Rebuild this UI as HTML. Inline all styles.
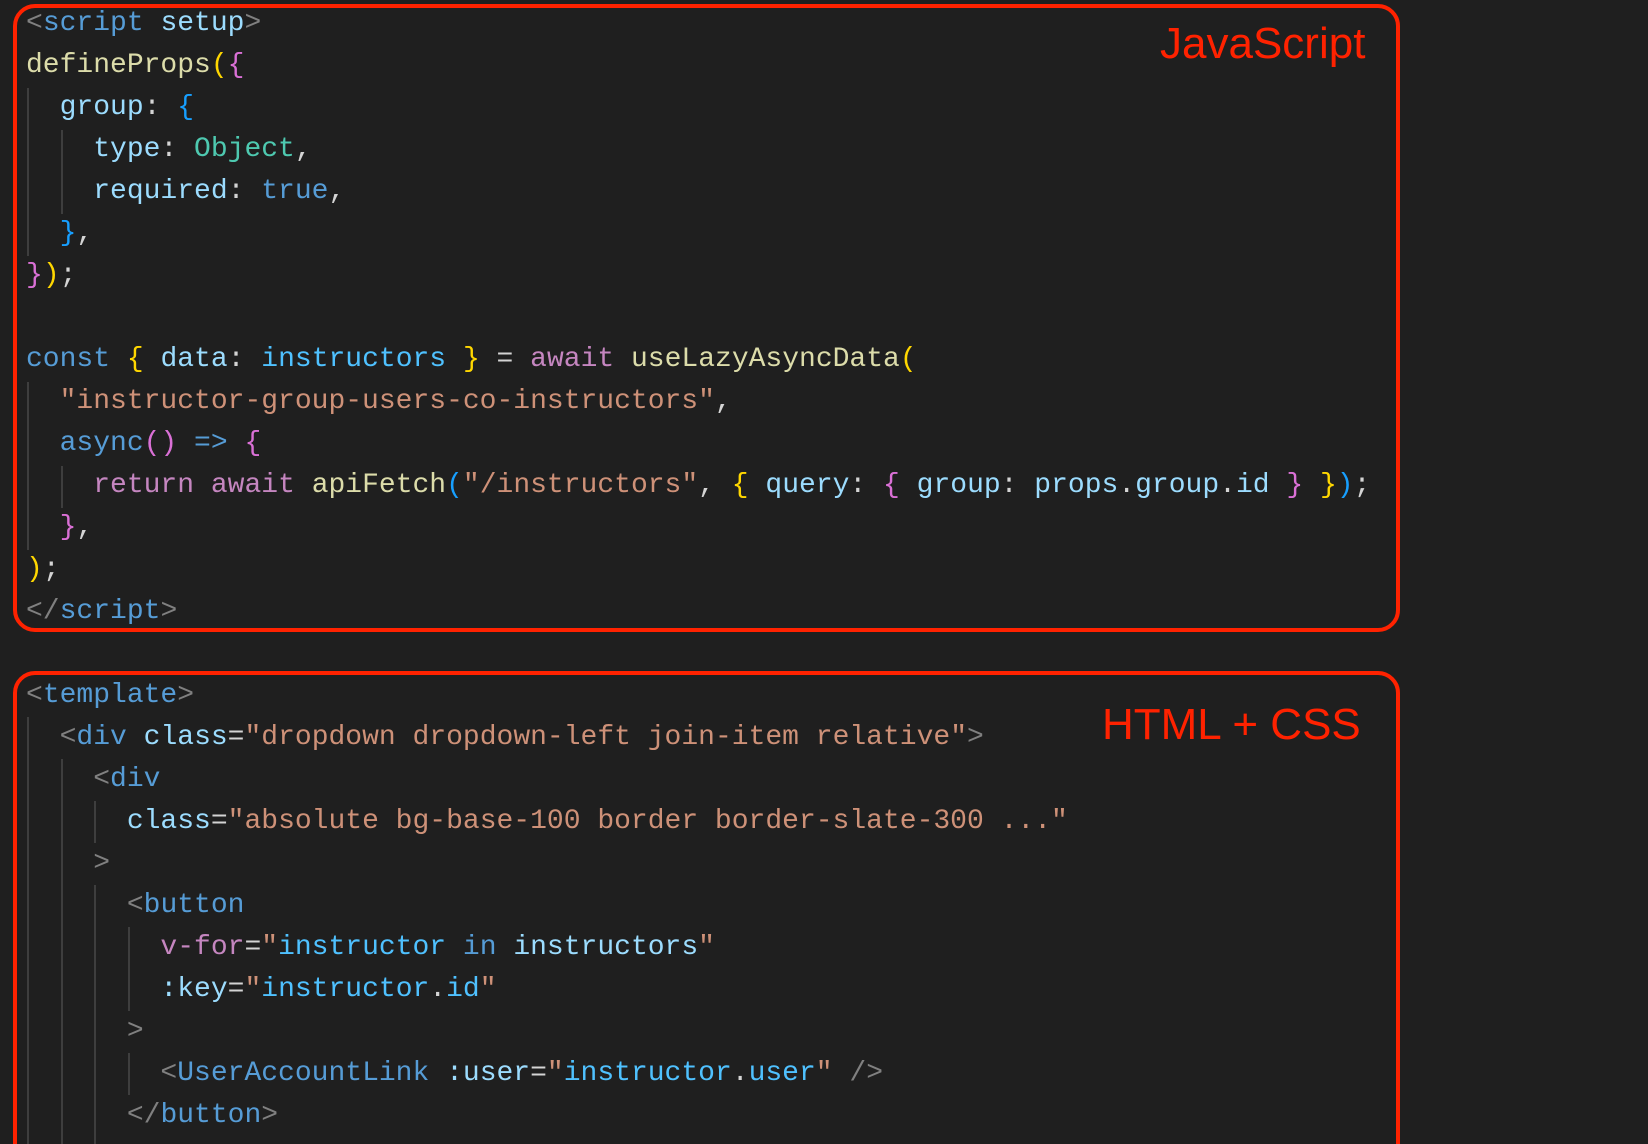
<!DOCTYPE html>
<html><head><meta charset="utf-8"><style>
html,body{margin:0;padding:0;background:#1f1f1f;width:1648px;height:1144px;overflow:hidden;}
body{position:relative;font-family:"Liberation Mono",monospace;}
pre{position:absolute;left:26px;top:3px;margin:0;font-family:"Liberation Mono",monospace;font-size:28px;line-height:42px;color:#d4d4d4;white-space:pre;}
.box{position:absolute;border:4px solid #ff2200;border-radius:22px;box-sizing:border-box;}
.lab{position:absolute;font-family:"Liberation Sans",Arial,sans-serif;font-size:44px;color:#ff2200;}
.g{position:absolute;width:2px;background:#3e3e3e;}
.p{color:#808080}.t{color:#569cd6}.a{color:#9cdcfe}.s{color:#ce9178}.f{color:#dcdcaa}
.k{color:#c586c0}.y{color:#ffd700}.m{color:#da70d6}.b{color:#179fff}.c{color:#4ec9b0}.v{color:#4fc1ff}
</style></head><body>
<div class="g" style="left:27px;top:88px;height:168px"></div>
<div class="g" style="left:61px;top:130px;height:84px"></div>
<div class="g" style="left:27px;top:382px;height:168px"></div>
<div class="g" style="left:61px;top:466px;height:42px"></div>
<div class="g" style="left:27px;top:717px;height:440px"></div>
<div class="g" style="left:61px;top:759px;height:400px"></div>
<div class="g" style="left:94px;top:801px;height:42px"></div>
<div class="g" style="left:94px;top:885px;height:260px"></div>
<div class="g" style="left:128px;top:927px;height:84px"></div>
<div class="g" style="left:128px;top:1053px;height:42px"></div>
<pre><span class="p">&lt;</span><span class="t">script</span> <span class="a">setup</span><span class="p">&gt;</span>
<span class="f">defineProps</span><span class="y">(</span><span class="m">{</span>
  <span class="a">group</span>: <span class="b">{</span>
    <span class="a">type</span>: <span class="c">Object</span>,
    <span class="a">required</span>: <span class="t">true</span>,
  <span class="b">}</span>,
<span class="m">}</span><span class="y">)</span>;

<span class="t">const</span> <span class="y">{</span> <span class="a">data</span>: <span class="v">instructors</span> <span class="y">}</span> = <span class="k">await</span> <span class="f">useLazyAsyncData</span><span class="y">(</span>
  <span class="s">"instructor-group-users-co-instructors"</span>,
  <span class="t">async</span><span class="m">()</span> <span class="t">=&gt;</span> <span class="m">{</span>
    <span class="k">return</span> <span class="k">await</span> <span class="f">apiFetch</span><span class="b">(</span><span class="s">"/instructors"</span>, <span class="y">{</span> <span class="a">query</span>: <span class="m">{</span> <span class="a">group</span>: <span class="a">props</span>.<span class="a">group</span>.<span class="a">id</span> <span class="m">}</span> <span class="y">}</span><span class="b">)</span>;
  <span class="m">}</span>,
<span class="y">)</span>;
<span class="p">&lt;/</span><span class="t">script</span><span class="p">&gt;</span>

<span class="p">&lt;</span><span class="t">template</span><span class="p">&gt;</span>
  <span class="p">&lt;</span><span class="t">div</span> <span class="a">class</span>=<span class="s">"dropdown dropdown-left join-item relative"</span><span class="p">&gt;</span>
    <span class="p">&lt;</span><span class="t">div</span>
      <span class="a">class</span>=<span class="s">"absolute bg-base-100 border border-slate-300 ..."</span>
    <span class="p">&gt;</span>
      <span class="p">&lt;</span><span class="t">button</span>
        <span class="k">v-for</span>=<span class="s">"</span><span class="v">instructor</span> <span class="t">in</span> <span class="a">instructors</span><span class="s">"</span>
        <span class="a">:key</span>=<span class="s">"</span><span class="v">instructor</span>.<span class="v">id</span><span class="s">"</span>
      <span class="p">&gt;</span>
        <span class="p">&lt;</span><span class="t">UserAccountLink</span> <span class="a">:user</span>=<span class="s">"</span><span class="v">instructor</span>.<span class="v">user</span><span class="s">"</span> <span class="p">/&gt;</span>
      <span class="p">&lt;/</span><span class="t">button</span><span class="p">&gt;</span></pre>
<div class="box" style="left:13px;top:4px;width:1387px;height:628px"></div>
<div class="box" style="left:13px;top:671px;width:1387px;height:520px"></div>
<div class="lab" style="left:1160px;top:19px">JavaScript</div>
<div class="lab" style="left:1102px;top:700px">HTML + CSS</div>
</body></html>
